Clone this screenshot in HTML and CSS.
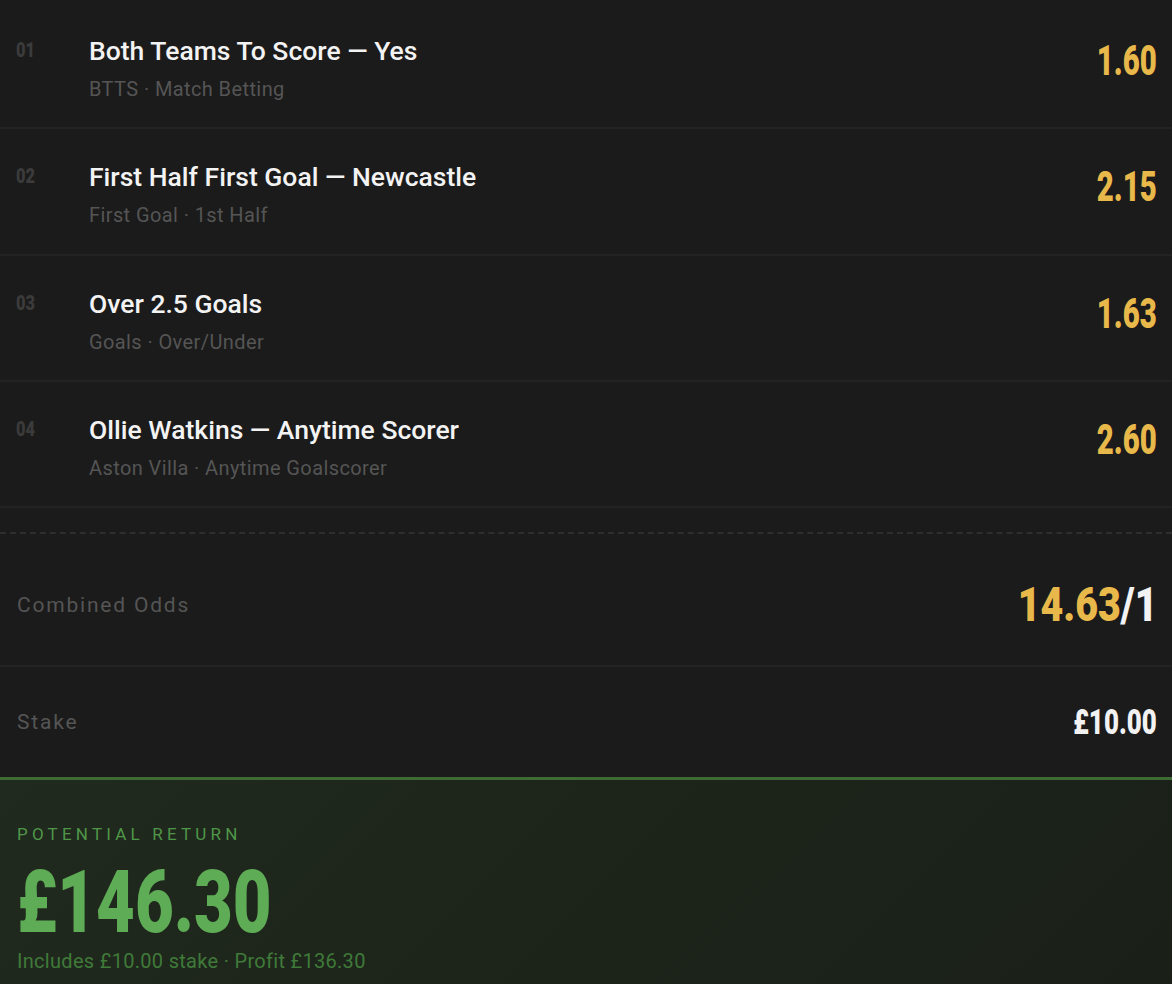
FILE: index.html
```html
<!DOCTYPE html>
<html lang="en">
<head>
<meta charset="utf-8">
<title>Bet Slip</title>
<link rel="stylesheet" href="styles.css">
</head>
<body>
<main class="slip">
  <ul class="legs">
    <li class="leg">
      <span class="leg-num">01</span>
      <div class="leg-info">
        <div class="leg-title">Both Teams To Score — Yes</div>
        <div class="leg-sub">BTTS · Match Betting</div>
      </div>
      <span class="leg-odds">1.60</span>
    </li>
    <li class="leg">
      <span class="leg-num">02</span>
      <div class="leg-info">
        <div class="leg-title">First Half First Goal — Newcastle</div>
        <div class="leg-sub">First Goal · 1st Half</div>
      </div>
      <span class="leg-odds">2.15</span>
    </li>
    <li class="leg">
      <span class="leg-num">03</span>
      <div class="leg-info">
        <div class="leg-title">Over 2.5 Goals</div>
        <div class="leg-sub">Goals · Over/Under</div>
      </div>
      <span class="leg-odds">1.63</span>
    </li>
    <li class="leg">
      <span class="leg-num">04</span>
      <div class="leg-info">
        <div class="leg-title">Ollie Watkins — Anytime Scorer</div>
        <div class="leg-sub">Aston Villa · Anytime Goalscorer</div>
      </div>
      <span class="leg-odds">2.60</span>
    </li>
  </ul>

  <section class="summary">
    <div class="sum-row sum-odds">
      <span class="sum-label">Combined Odds</span>
      <span class="sum-value odds-big"><span class="gold">14.63</span>/1</span>
    </div>
    <div class="sum-row sum-stake">
      <span class="sum-label">Stake</span>
      <span class="sum-value stake-val">£10.00</span>
    </div>
  </section>

  <section class="return">
    <div class="ret-label">Potential Return</div>
    <div class="ret-amount">£146.30</div>
    <div class="ret-note">Includes £10.00 stake · Profit £136.30</div>
  </section>
</main>
</body>
</html>
```

FILE: styles.css
```css
* { box-sizing: border-box; }
html, body {
  margin: 0;
  padding: 0;
  background: #1b1b1b;
}
body {
  font-family: Roboto, "Noto Sans", sans-serif;
  color: #f2f2f2;
}
.slip {
  width: 1172px;
  min-height: 984px;
  padding-top: 3px;
}
.legs {
  list-style: none;
  margin: 0;
  padding: 0;
}
.leg {
  display: grid;
  grid-template-columns: 73px 1fr auto;
  align-items: start;
  padding: 30px 15px 0 16px;
  border-bottom: 2px solid #232323;
  height: 126.33px;
}
.leg-num {
  display: inline-block;
  font-family: Roboto, sans-serif;
  font-weight: 900;
  font-size: 21px;
  line-height: 24px;
  color: #3b3b3b;
  margin-top: 5px;
  transform: scaleX(0.78);
  transform-origin: left center;
}
.leg-title {
  font-size: 26.5px;
  font-weight: 500;
  line-height: 36px;
  color: #f3f3f3;
}
.leg-sub {
  font-size: 20px;
  line-height: 24px;
  letter-spacing: 0.4px;
  margin-top: 8px;
  color: #555555;
}
.leg-odds {
  display: inline-block;
  font-family: Roboto, sans-serif;
  font-weight: 900;
  font-size: 42px;
  line-height: 50px;
  color: #e8b84a;
  margin-top: 3px;
  transform: scaleX(0.7);
  transform-origin: right center;
}
.summary {
  margin-top: 24px;
  border-top: 2px dashed #2e2e2e;
}
.sum-row {
  display: flex;
  justify-content: space-between;
  align-items: center;
  padding: 0 15px 0 17px;
}
.sum-odds {
  height: 133px;
  padding-top: 10px;
  border-bottom: 2px solid #232323;
}
.sum-stake {
  height: 110px;
}
.sum-label {
  font-size: 21px;
  letter-spacing: 1.8px;
  color: #555555;
}
.sum-value {
  display: inline-block;
  font-family: Roboto, sans-serif;
  font-weight: 900;
  color: #f2f2f2;
  transform-origin: right center;
}
.odds-big {
  font-size: 48px;
  transform: scaleX(0.82);
}
.gold { color: #e8b84a; }
.stake-val {
  font-size: 35px;
  transform: scaleX(0.74);
}
.return {
  border-top: 3px solid #3e6a33;
  background: linear-gradient(135deg, #212a1f 0%, #1d251b 45%, #1a2018 100%);
  padding: 44px 17px 20px;
  min-height: 210px;
}
.ret-label {
  font-size: 17px;
  letter-spacing: 4.2px;
  text-transform: uppercase;
  color: #4f9748;
  line-height: 20px;
}
.ret-amount {
  display: inline-block;
  font-family: Roboto, sans-serif;
  font-weight: 900;
  font-size: 87px;
  line-height: 88px;
  color: #5eac55;
  margin-top: 14px;
  transform: scaleX(0.77);
  transform-origin: left center;
}
.ret-note {
  font-size: 20px;
  line-height: 24px;
  letter-spacing: 0.3px;
  color: #3f7a39;
  margin-top: 3px;
}
```
